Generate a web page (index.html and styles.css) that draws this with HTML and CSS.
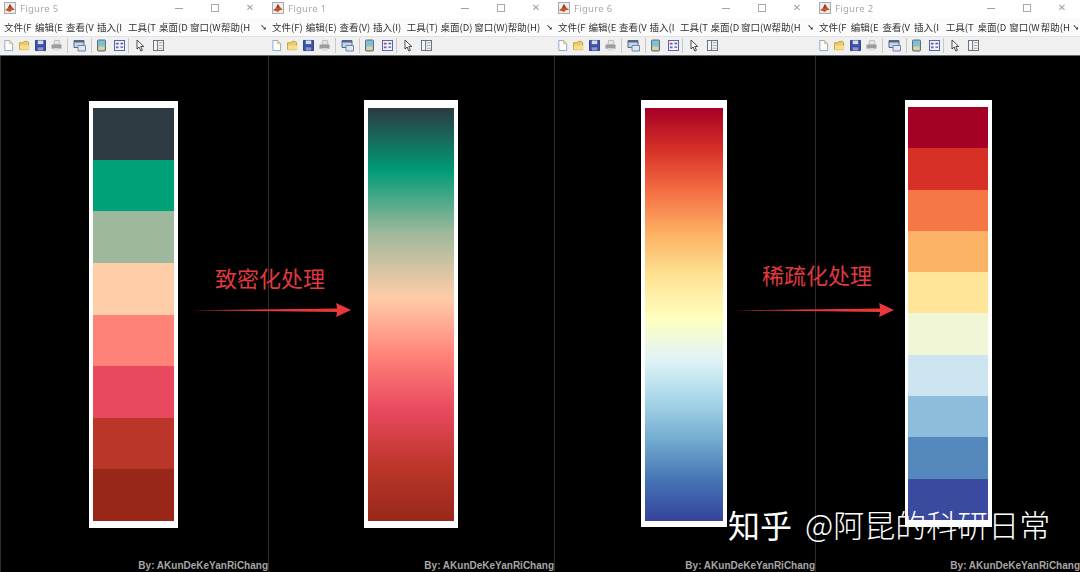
FILE: index.html
```html
<!DOCTYPE html>
<html lang="zh-CN">
<head>
    <meta charset="UTF-8">
    <title>Figure</title>
    <link rel="stylesheet" href="styles.css">
</head>
<body>
    <svg class="defs" width="0" height="0">
        <symbol id="i-logo" viewBox="0 0 12 12">
            <rect x="0.5" y="0.5" width="11" height="11" fill="#eee" stroke="#a9a9b5"/>
            <path d="M1 8l3-2 2-4 2 3 3 3-3 0-2 2z" fill="#c8502a"/>
            <path d="M4 6l2-4 1 3z" fill="#7c3a2a"/>
        </symbol>
        <symbol id="i-new" viewBox="0 0 12 12">
            <path d="M2 .5h5l3.500 3.500v7.500h-8.500z" fill="#fdfdfd" stroke="#7fa6c9"/>
            <path d="M7 .5v3.500h3.500z" fill="#f2d9a0" stroke="#d3a95c" stroke-width=".6"/>
        </symbol>
        <symbol id="i-open" viewBox="0 0 12 12">
            <path d="M.5 3h4l1-1.500h4l1 1.500v7.500h-10z" fill="#eccb6a" stroke="#c69c3c"/>
            <path d="M1 6h10v4.500h-10z" fill="#f5de8e"/>
        </symbol>
        <symbol id="i-save" viewBox="0 0 12 12">
            <path d="M.5.500h11v11h-11z" fill="#3d51a8" stroke="#2c3a80"/>
            <path d="M3 .5h6v4h-6z" fill="#d8dcf0"/>
            <path d="M3 8h6v3.500h-6z" fill="#8b95c9"/>
        </symbol>
        <symbol id="i-print" viewBox="0 0 12 12">
            <path d="M3 5l1-4.500h5l1 4.500z" fill="#e4e4e4" stroke="#a5a5a5" stroke-width=".7"/>
            <path d="M.5 5h11v4.500h-11z" fill="#9b9ba3"/>
            <path d="M2.500 9h7v2.500h-7z" fill="#dcdcdc"/>
        </symbol>
        <symbol id="i-link" viewBox="0 0 13 12">
            <path d="M1 1h10v7h-10z" fill="#c8d4e4" stroke="#50688c"/>
            <path d="M1 1h10v2h-10z" fill="#50688c"/>
            <path d="M5 6h7.500v5.500h-7.500z" fill="#dfe6ef" stroke="#6f86a6"/>
        </symbol>
        <symbol id="i-bar" viewBox="0 0 9 12">
            <rect x=".5" y=".5" width="8" height="11" rx="1" fill="#7fc0d4" stroke="#5a6e80"/>
            <rect x="1.500" y="7" width="6" height="3.500" fill="#e8cf8a"/>
        </symbol>
        <symbol id="i-legend" viewBox="0 0 12 12">
            <rect x=".5" y=".5" width="11" height="11" fill="#f2f2fa" stroke="#4c5aa8"/>
            <path d="M2 3h3v2h-3z" fill="#c8444c"/>
            <path d="M7 3h3v1.500h-3zM7 7h3v1.500h-3z" fill="#4c5aa8"/>
            <path d="M2 7h3v2h-3z" fill="#4c78c8"/>
        </symbol>
        <symbol id="i-cursor" viewBox="0 0 9 12">
            <path d="M1 .5v9l2.200-2 1.600 4 1.600-.7-1.600-3.800h3z" fill="#fff" stroke="#33383f" stroke-width=".9"/>
        </symbol>
        <symbol id="i-panel" viewBox="0 0 12 12">
            <rect x=".5" y=".5" width="11" height="11" fill="#f4f4f4" stroke="#5d6a78"/>
            <path d="M5 .5v11" stroke="#5d6a78"/>
            <path d="M6.500 3h4M6.500 6h4M6.500 9h4" stroke="#9aa3ad"/>
        </symbol>
    </svg>

    <div class="desktop">

        <div class="window win-a">
            <div class="chrome">
                <div class="title-bar">
                    <svg class="logo"><use href="#i-logo"/></svg>
                    <span class="title">Figure 5</span>
                    <span class="ctl ctl-min"></span>
                    <span class="ctl ctl-max"></span>
                    <span class="ctl ctl-close">✕</span>
                </div>
                <div class="menu-bar">
                    <span class="m">文件(F</span><span class="m">编辑(E</span><span class="m">查看(V</span><span class="m">插入(I</span><span class="m">工具(T</span><span class="m">桌面(D</span><span class="m">窗口(W</span><span class="m">帮助(H</span>
                    <span class="more">➘</span>
                </div>
                <div class="tool-bar">
                    <svg class="t"><use href="#i-new"/></svg><svg class="t"><use href="#i-open"/></svg><svg class="t"><use href="#i-save"/></svg><svg class="t"><use href="#i-print"/></svg><i class="sep"></i><svg class="t t-wide"><use href="#i-link"/></svg><i class="sep"></i><svg class="t t-thin"><use href="#i-bar"/></svg><svg class="t"><use href="#i-legend"/></svg><i class="sep"></i><svg class="t t-thin"><use href="#i-cursor"/></svg><svg class="t"><use href="#i-panel"/></svg>
                </div>
            </div>
            <div class="canvas">
                <div class="frame">
                    <div class="bar steps-8"><i></i><i></i><i></i><i></i><i></i><i></i><i></i><i></i></div>
                </div>
                <div class="by">By: AKunDeKeYanRiChang</div>
            </div>
        </div>

        <div class="window win-b">
            <div class="chrome">
                <div class="title-bar">
                    <svg class="logo"><use href="#i-logo"/></svg>
                    <span class="title">Figure 1</span>
                    <span class="ctl ctl-min"></span>
                    <span class="ctl ctl-max"></span>
                    <span class="ctl ctl-close">✕</span>
                </div>
                <div class="menu-bar">
                    <span class="m">文件(F)</span><span class="m">编辑(E)</span><span class="m">查看(V)</span><span class="m">插入(I)</span><span class="m">工具(T)</span><span class="m">桌面(D)</span><span class="m">窗口(W)</span><span class="m">帮助(H)</span>
                    <span class="more">➘</span>
                </div>
                <div class="tool-bar">
                    <svg class="t"><use href="#i-new"/></svg><svg class="t"><use href="#i-open"/></svg><svg class="t"><use href="#i-save"/></svg><svg class="t"><use href="#i-print"/></svg><i class="sep"></i><svg class="t t-wide"><use href="#i-link"/></svg><i class="sep"></i><svg class="t t-thin"><use href="#i-bar"/></svg><svg class="t"><use href="#i-legend"/></svg><i class="sep"></i><svg class="t t-thin"><use href="#i-cursor"/></svg><svg class="t"><use href="#i-panel"/></svg>
                </div>
            </div>
            <div class="canvas">
                <div class="frame">
                    <div class="bar smooth-8"></div>
                </div>
                <div class="by">By: AKunDeKeYanRiChang</div>
            </div>
        </div>

        <div class="window win-c">
            <div class="chrome">
                <div class="title-bar">
                    <svg class="logo"><use href="#i-logo"/></svg>
                    <span class="title">Figure 6</span>
                    <span class="ctl ctl-min"></span>
                    <span class="ctl ctl-max"></span>
                    <span class="ctl ctl-close">✕</span>
                </div>
                <div class="menu-bar">
                    <span class="m">文件(F</span><span class="m">编辑(E</span><span class="m">查看(V</span><span class="m">插入(I</span><span class="m">工具(T</span><span class="m">桌面(D</span><span class="m">窗口(W</span><span class="m">帮助(H</span>
                    <span class="more">➘</span>
                </div>
                <div class="tool-bar">
                    <svg class="t"><use href="#i-new"/></svg><svg class="t"><use href="#i-open"/></svg><svg class="t"><use href="#i-save"/></svg><svg class="t"><use href="#i-print"/></svg><i class="sep"></i><svg class="t t-wide"><use href="#i-link"/></svg><i class="sep"></i><svg class="t t-thin"><use href="#i-bar"/></svg><svg class="t"><use href="#i-legend"/></svg><i class="sep"></i><svg class="t t-thin"><use href="#i-cursor"/></svg><svg class="t"><use href="#i-panel"/></svg>
                </div>
            </div>
            <div class="canvas">
                <div class="frame">
                    <div class="bar smooth-11"></div>
                </div>
                <div class="by">By: AKunDeKeYanRiChang</div>
            </div>
        </div>

        <div class="window win-d">
            <div class="chrome">
                <div class="title-bar">
                    <svg class="logo"><use href="#i-logo"/></svg>
                    <span class="title">Figure 2</span>
                    <span class="ctl ctl-min"></span>
                    <span class="ctl ctl-max"></span>
                    <span class="ctl ctl-close">✕</span>
                </div>
                <div class="menu-bar">
                    <span class="m">文件(F</span><span class="m">编辑(E</span><span class="m">查看(V</span><span class="m">插入(I</span><span class="m">工具(T</span><span class="m">桌面(D</span><span class="m">窗口(W</span><span class="m">帮助(H</span>
                    <span class="more">➘</span>
                </div>
                <div class="tool-bar">
                    <svg class="t"><use href="#i-new"/></svg><svg class="t"><use href="#i-open"/></svg><svg class="t"><use href="#i-save"/></svg><svg class="t"><use href="#i-print"/></svg><i class="sep"></i><svg class="t t-wide"><use href="#i-link"/></svg><i class="sep"></i><svg class="t t-thin"><use href="#i-bar"/></svg><svg class="t"><use href="#i-legend"/></svg><i class="sep"></i><svg class="t t-thin"><use href="#i-cursor"/></svg><svg class="t"><use href="#i-panel"/></svg>
                </div>
            </div>
            <div class="canvas">
                <div class="frame">
                    <div class="bar steps-10"><i></i><i></i><i></i><i></i><i></i><i></i><i></i><i></i><i></i><i></i></div>
                </div>
                <div class="by">By: AKunDeKeYanRiChang</div>
            </div>
        </div>

        <!-- annotations drawn over the windows -->
        <div class="note note-a">致密化处理</div>
        <svg class="arrow arrow-a" viewBox="0 0 160 16"><path d="M0 8.300L146 6.500 145 1 160 8 145 15 146 10z" fill="#e8383b"/></svg>
        <div class="note note-b">稀疏化处理</div>
        <svg class="arrow arrow-b" viewBox="0 0 160 16"><path d="M0 8.300L146 6.500 145 1 160 8 145 15 146 10z" fill="#e8383b"/></svg>
        <div class="mark"><span class="mark-zh">知乎</span><span class="mark-name">@阿昆的科研日常</span></div>
    </div>
</body>
</html>
```

FILE: styles.css
```css
html, body {
    margin: 0;
    padding: 0;
    width: 1080px;
    height: 572px;
    overflow: hidden;
    background: #000;
}

.defs {
    display: none;
}

.desktop {
    position: relative;
    display: grid;
    grid-template-columns: 268px 286px 261px 265px;
    height: 572px;
    font-family: "Noto Sans CJK SC", "Liberation Sans", sans-serif;
}

.window {
    display: flex;
    flex-direction: column;
    min-width: 0;
    overflow: hidden;
}

.chrome {
    flex-shrink: 0;
    filter: blur(0.5px);
}

/* title bar */
.title-bar {
    display: flex;
    align-items: center;
    height: 16px;
    padding: 0 0 2px 4px;
    background: #fff;
}

.logo {
    width: 12px;
    height: 12px;
    flex-shrink: 0;
}

.title {
    margin-left: 4px;
    font-family: "Noto Sans", "Liberation Sans", sans-serif;
    font-size: 9.500px;
    letter-spacing: 0.3px;
    color: #a8a8a8;
    flex: 1;
}

.ctl {
    flex-shrink: 0;
    display: block;
    box-sizing: border-box;
    color: #8c8c8c;
}

.ctl-min {
    width: 8px;
    height: 1px;
    background: #a0a0a0;
    margin-right: 28px;
}

.ctl-max {
    width: 8px;
    height: 8px;
    border: 1px solid #a8a8a8;
    margin-right: 26px;
}

.ctl-close {
    width: 10px;
    margin-right: 13px;
    font-size: 10px;
    line-height: 10px;
    text-align: center;
    font-family: "DejaVu Sans", sans-serif;
    color: #9c9c9c;
}

/* menu bar */
.menu-bar {
    display: flex;
    align-items: center;
    height: 18px;
    padding-left: 4px;
    background: #fbfbfb;
    font-size: 9.500px;
    color: #333;
    border-bottom: 1px solid #e2e2e2;
}

.m {
    flex-shrink: 0;
    white-space: nowrap;
}

.win-a .m { width: 31px; }
.win-b .m { width: 33.700px; }
.win-c .m { width: 30.500px; }
.win-d .m { width: 31.700px; }

.more {
    margin-left: auto;
    margin-right: 1px;
    font-size: 8px;
    font-family: "DejaVu Sans", sans-serif;
    color: #222;
}

/* tool bar */
.tool-bar {
    display: flex;
    align-items: center;
    gap: 5px;
    height: 17px;
    padding: 0 0 1px 3px;
    background: #f0f0f0;
    border-bottom: 1px solid #6a6a6a;
}

.t {
    width: 11px;
    height: 13px;
    flex-shrink: 0;
}

.t-wide { width: 13px; }
.t-thin { width: 9px; }
.t-thin + .t { margin-left: 3px; }
.t-thin + .t + .sep { margin: 0 2px 0 -2px; }

.sep {
    width: 1px;
    height: 15px;
    background: #c8c8c8;
    flex-shrink: 0;
}

/* figure canvas */
.canvas {
    flex: 1;
    display: flex;
    flex-direction: column;
    background: #000;
    box-shadow: inset 1px 0 0 #2c2c2c;
}

.frame {
    box-sizing: border-box;
    background: #fff;
    padding: 7px 4px 7px;
    height: 427px;
    margin-top: 45px;
}

.win-a .frame { width: 89px; margin-left: 89px; }
.win-b .frame { width: 94px; margin-left: 96px; margin-top: 44px; height: 428px; padding-top: 8px; }
.win-c .frame { width: 86px; margin-left: 87px; margin-top: 44px; padding-top: 8px; padding-bottom: 6px; }
.win-d .frame { width: 87px; margin-left: 90px; margin-top: 44px; padding-left: 3px; }

.bar {
    height: 100%;
    display: flex;
    flex-direction: column;
}

.bar i {
    flex: 1;
    display: block;
}

.steps-8 i:nth-child(1) { background: #2d3a42; }
.steps-8 i:nth-child(2) { background: #00a078; }
.steps-8 i:nth-child(3) { background: #9db89c; }
.steps-8 i:nth-child(4) { background: #ffcda8; }
.steps-8 i:nth-child(5) { background: #ff8279; }
.steps-8 i:nth-child(6) { background: #e8495f; }
.steps-8 i:nth-child(7) { background: #bb3629; }
.steps-8 i:nth-child(8) { background: #98271a; }

.smooth-8 {
    background: linear-gradient(#2d3a42 0%, #009a76 15%, #9db89c 30%, #ffcda8 46%, #ff8279 60%, #e8495f 73%, #bb3629 87%, #98271a 100%);
}

.smooth-11 {
    background: linear-gradient(#a50026 0%, #d73027 10%, #f46d43 20%, #fdae61 30%, #fee090 40%, #ffffbf 51%, #e0f3f8 61%, #abd9e9 70%, #74add1 80%, #4575b4 90%, #35439c 100%);
}

.steps-10 i:nth-child(1) { background: #a50026; }
.steps-10 i:nth-child(2) { background: #d73027; }
.steps-10 i:nth-child(3) { background: #f67646; }
.steps-10 i:nth-child(4) { background: #fdb366; }
.steps-10 i:nth-child(5) { background: #fee598; }
.steps-10 i:nth-child(6) { background: #f1f7d6; }
.steps-10 i:nth-child(7) { background: #cce5f0; }
.steps-10 i:nth-child(8) { background: #8dbcdc; }
.steps-10 i:nth-child(9) { background: #5588bd; }
.steps-10 i:nth-child(10) { background: #3a4a9f; }

.by {
    margin-top: auto;
    height: 12px;
    line-height: 12px;
    text-align: right;
    white-space: nowrap;
    font-family: "Liberation Sans", sans-serif;
    font-size: 10px;
    font-weight: bold;
    color: #a6a6a6;
}

/* annotations */
.note {
    position: absolute;
    font-size: 22px;
    line-height: 30px;
    color: #e0393e;
    white-space: nowrap;
}

.note-a { left: 215px; top: 262px; }
.note-b { left: 762px; top: 259px; }

.arrow {
    position: absolute;
    width: 159px;
    height: 16px;
    top: 302px;
}

.arrow-a { left: 192px; }
.arrow-b { left: 735px; }

.mark {
    position: absolute;
    left: 728px;
    top: 502px;
    display: flex;
    gap: 13px;
    align-items: center;
    line-height: 44px;
    color: #fff;
    white-space: nowrap;
}

.mark-zh {
    font-size: 32px;
    font-weight: 400;
}

.mark-name {
    font-size: 31px;
    font-weight: 300;
}
```
